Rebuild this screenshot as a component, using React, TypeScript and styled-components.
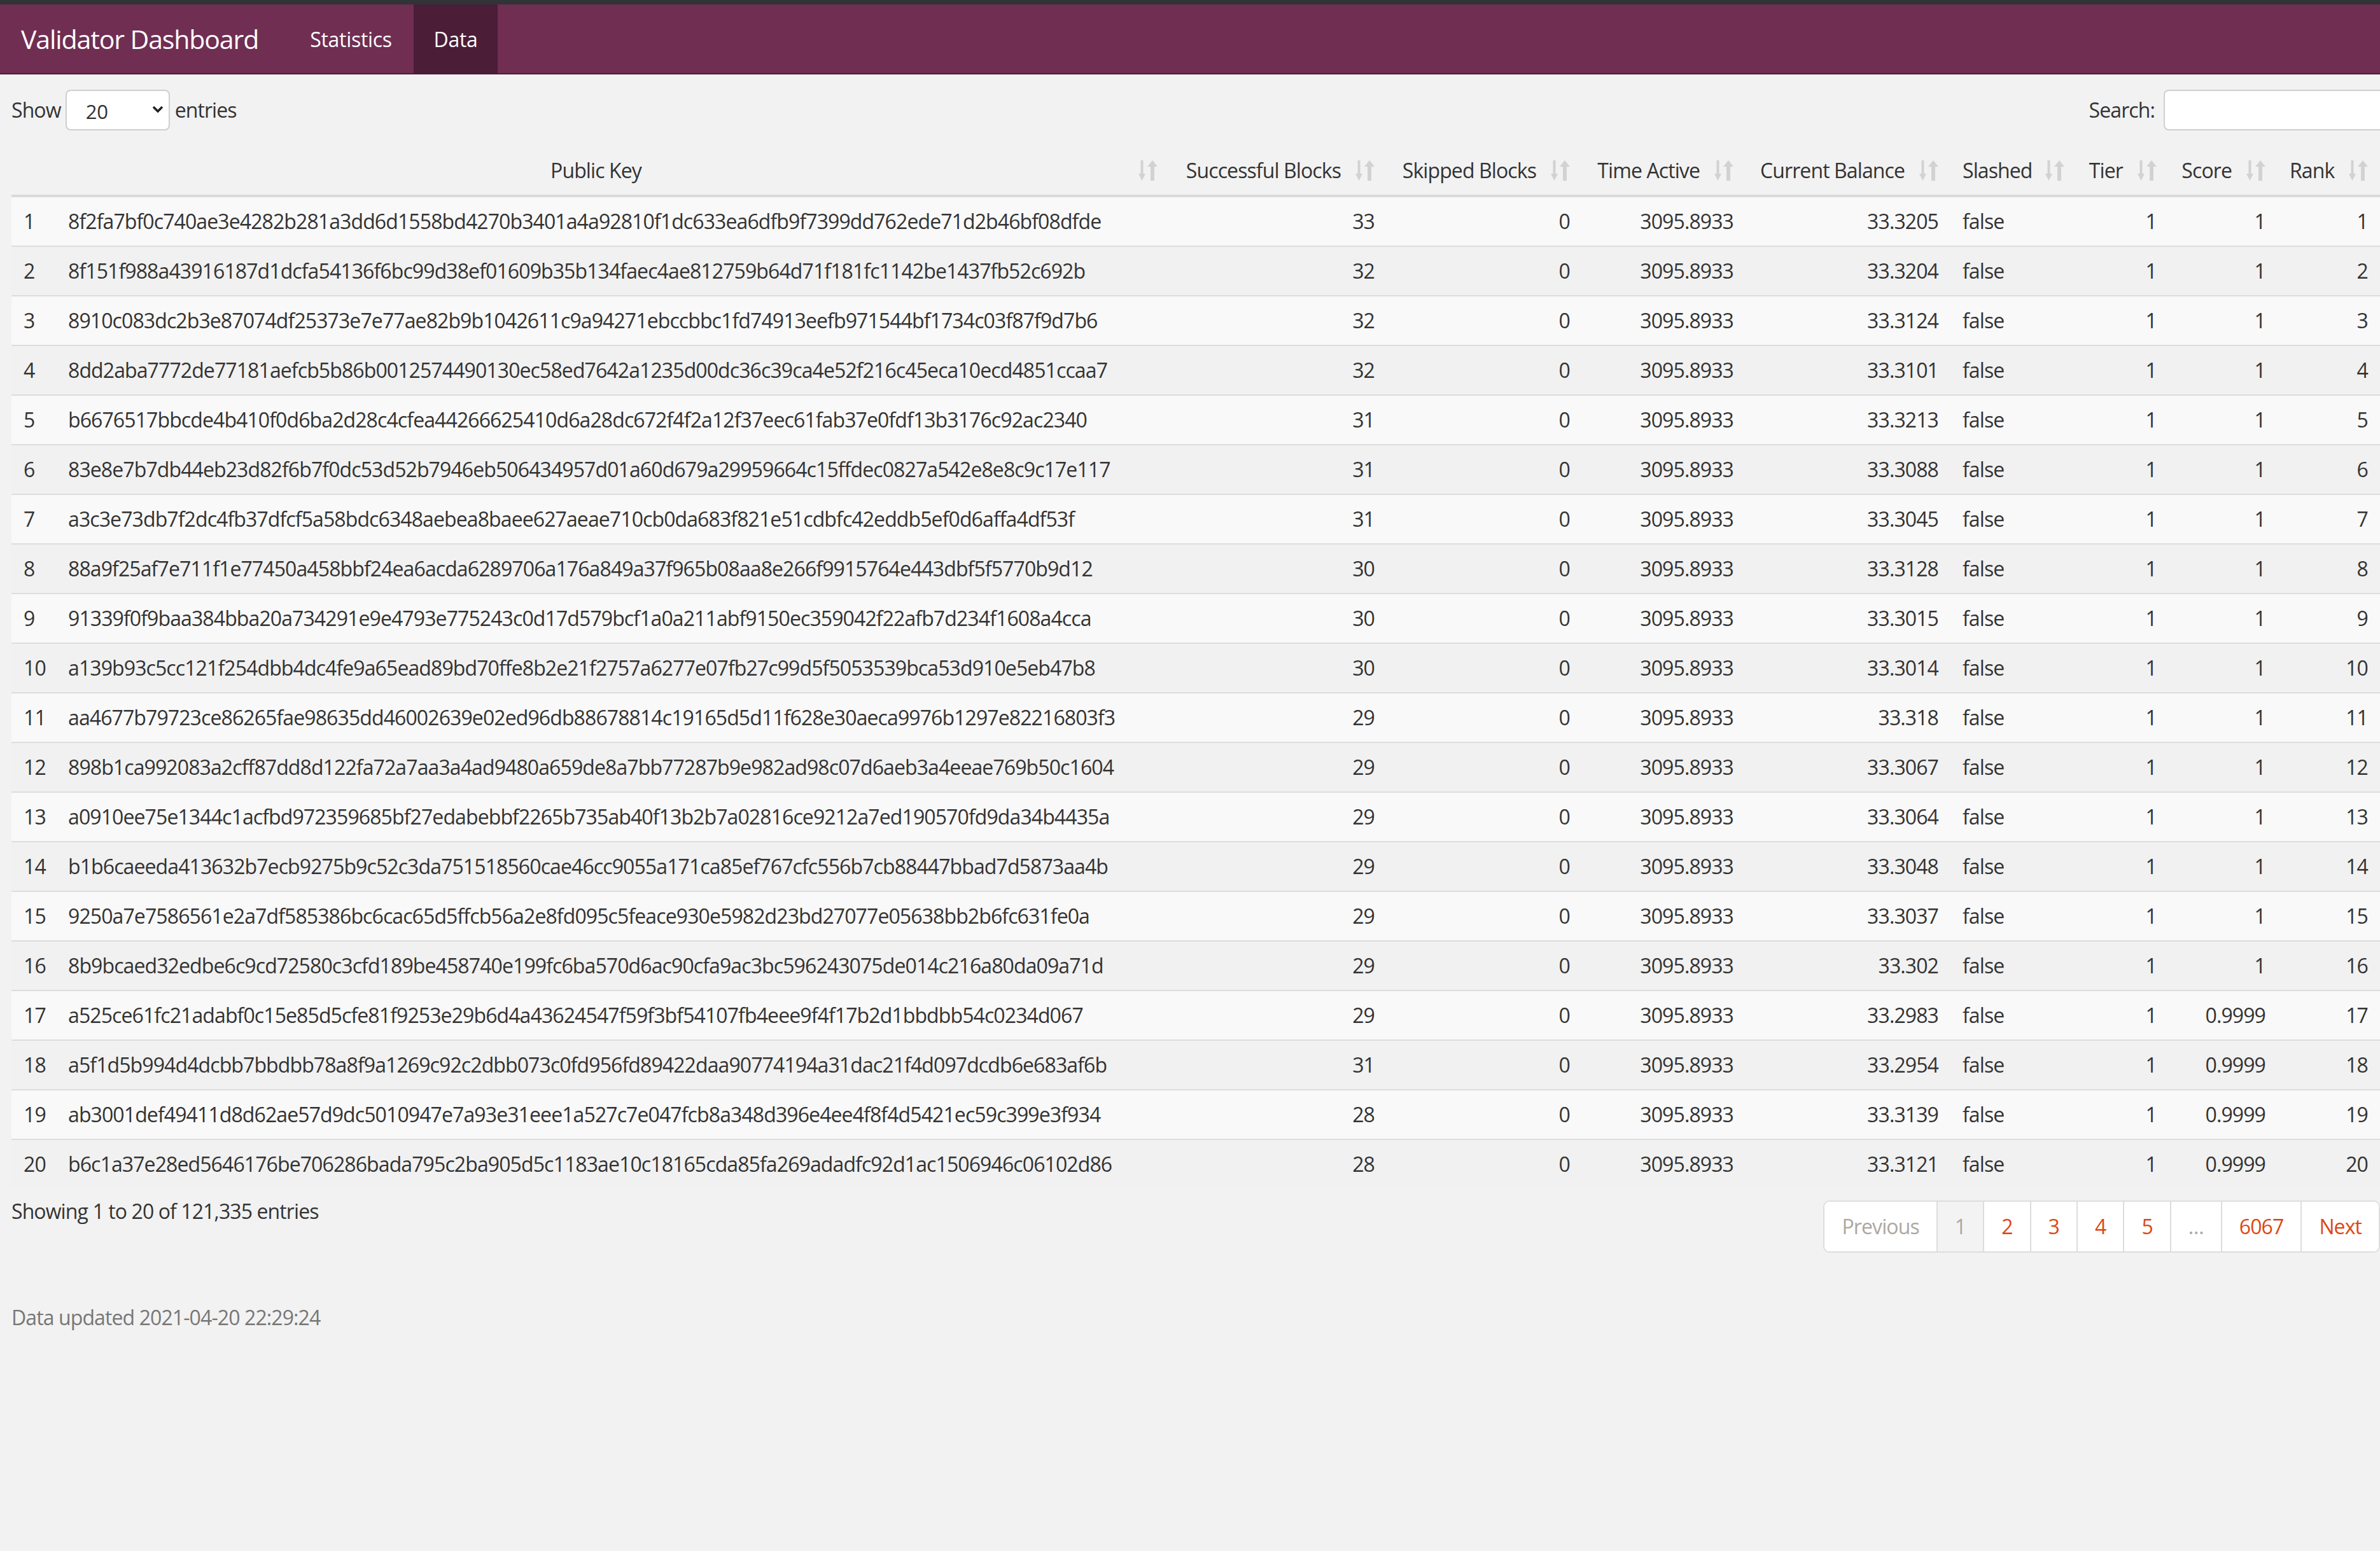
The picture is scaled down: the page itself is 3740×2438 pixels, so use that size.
import React from 'react';
import styled, { createGlobalStyle } from 'styled-components';

const GlobalStyle = createGlobalStyle`
  html, body { margin: 0; padding: 0; background: #f2f2f2; overflow: hidden; }
  body { font-family: "Open Sans", "Liberation Sans", sans-serif; color: #333; }
  * { box-sizing: border-box; }
`;

const Page = styled.div`
  width: 3740px;
  height: 2438px;
  overflow: hidden;
  background: #f2f2f2;
  display: flex;
  flex-direction: column;
`;

const TopStrip = styled.div`
  height: 7px;
  background: #323336;
  flex: 0 0 auto;
`;

const Navbar = styled.nav`
  display: flex;
  height: 110px;
  flex: 0 0 auto;
  background: #702e52;
  border-bottom: 2px solid #4f1c39;
`;

const Brand = styled.a`
  flex: 0 0 453px;
  padding-left: 33px;
  display: flex;
  align-items: center;
  font-size: 41px;
  letter-spacing: -1.1px;
  color: #fff;
`;

const NavItem = styled.a<{ $active?: boolean; $w: number }>`
  flex: 0 0 ${(p) => p.$w}px;
  display: flex;
  align-items: center;
  justify-content: center;
  font-size: 32px;
  letter-spacing: -0.3px;
  color: #fff;
  background: ${(p) => (p.$active ? '#4b1d37' : 'transparent')};
`;

const Main = styled.main`
  padding-left: 18px;
  font-size: 32px;
  letter-spacing: -0.9px;
`;

const Controls = styled.div`
  margin-top: 24px;
  height: 64px;
  margin-right: -40px;
  display: flex;
  justify-content: space-between;
  align-items: center;
`;

const Inline = styled.label`
  display: flex;
  align-items: center;
  line-height: 48px;
`;

const SelectWrap = styled.div`
  position: relative;
  width: 164px;
  height: 64px;
  margin: 0 8px 0 7px;
`;

const Select = styled.select`
  appearance: none;
  width: 100%;
  height: 100%;
  background: #fff;
  border: 2px solid #cfcfcf;
  border-radius: 8px;
  padding: 4px 0 0 30px;
  font-family: inherit;
  font-size: 31px;
  color: #333;
  outline: none;
`;

const Chevron = styled.svg`
  position: absolute;
  right: 10px;
  top: 24px;
  width: 18px;
  height: 14px;
  pointer-events: none;
`;

const SearchInput = styled.input`
  width: 380px;
  height: 64px;
  margin-left: 14px;
  background: #fff;
  border: 2px solid #cfcfcf;
  border-radius: 8px;
  outline: none;
`;

const Table = styled.table`
  margin-top: 25px;
  width: 3722px;
  table-layout: fixed;
  border-collapse: collapse;

  tbody tr + tr td {
    border-top: 2px solid #dddddd;
  }
`;

const Th = styled.th<{ $align: 'left' | 'right' | 'center'; $sortable: boolean }>`
  position: relative;
  line-height: 76px;
  padding: 0 ${(p) => (p.$sortable ? 72 : 19)}px 0 19px;
  text-align: ${(p) => p.$align};
  font-weight: 400;
  white-space: nowrap;
  border-bottom: 4px solid #dadada;
`;

const SortIcon = styled.svg`
  position: absolute;
  right: 19px;
  top: 22px;
  width: 30px;
  height: 32px;
`;

const Tr = styled.tr<{ $odd: boolean }>`
  background: ${(p) => (p.$odd ? '#f9f9f9' : '#f1f1f1')};
`;

const Td = styled.td<{ $align: 'left' | 'right' }>`
  line-height: 76px;
  padding: 0 19px;
  text-align: ${(p) => p.$align};
  white-space: nowrap;
  overflow: hidden;
`;

const Footer = styled.div`
  margin-top: 12px;
  display: flex;
  justify-content: space-between;
  align-items: flex-start;
`;

const Info = styled.div`
  line-height: 48px;
`;

const Pagination = styled.ul`
  list-style: none;
  margin: 7px 0 0 0;
  padding: 0;
  display: flex;
  background: #fff;
  border: 2px solid #dddddd;
  border-radius: 10px;
  overflow: hidden;

  li + li {
    border-left: 2px solid #dddddd;
  }
`;

const PageBtn = styled.li<{ $state: 'disabled' | 'current' | 'link' }>`
  height: 78px;
  line-height: 78px;
  padding: 0 27px;
  color: ${(p) => (p.$state === 'link' ? '#dd4814' : '#aea79f')};
  background: ${(p) => (p.$state === 'current' ? '#f3f3f3' : '#fff')};
`;

const Updated = styled.div`
  margin-top: 78px;
  line-height: 48px;
  color: #777;
`;

type Col = { label: string; width: number; head: 'left' | 'right' | 'center'; cell: 'left' | 'right'; sortable: boolean };

const cols: Col[] = [
  { label: '', width: 70, head: 'left', cell: 'left', sortable: false },
  { label: 'Public Key', width: 1750, head: 'center', cell: 'left', sortable: true },
  { label: 'Successful Blocks', width: 341, head: 'right', cell: 'right', sortable: true },
  { label: 'Skipped Blocks', width: 307, head: 'right', cell: 'right', sortable: true },
  { label: 'Time Active', width: 257, head: 'right', cell: 'right', sortable: true },
  { label: 'Current Balance', width: 322, head: 'right', cell: 'right', sortable: true },
  { label: 'Slashed', width: 198, head: 'left', cell: 'left', sortable: true },
  { label: 'Tier', width: 145, head: 'right', cell: 'right', sortable: true },
  { label: 'Score', width: 171, head: 'right', cell: 'right', sortable: true },
  { label: 'Rank', width: 161, head: 'right', cell: 'right', sortable: true },
];

const data: [string, number, string, string][] = [
  ['8f2fa7bf0c740ae3e4282b281a3dd6d1558bd4270b3401a4a92810f1dc633ea6dfb9f7399dd762ede71d2b46bf08dfde', 33, '33.3205', '1'],
  ['8f151f988a43916187d1dcfa54136f6bc99d38ef01609b35b134faec4ae812759b64d71f181fc1142be1437fb52c692b', 32, '33.3204', '1'],
  ['8910c083dc2b3e87074df25373e7e77ae82b9b1042611c9a94271ebccbbc1fd74913eefb971544bf1734c03f87f9d7b6', 32, '33.3124', '1'],
  ['8dd2aba7772de77181aefcb5b86b0012574490130ec58ed7642a1235d00dc36c39ca4e52f216c45eca10ecd4851ccaa7', 32, '33.3101', '1'],
  ['b6676517bbcde4b410f0d6ba2d28c4cfea44266625410d6a28dc672f4f2a12f37eec61fab37e0fdf13b3176c92ac2340', 31, '33.3213', '1'],
  ['83e8e7b7db44eb23d82f6b7f0dc53d52b7946eb506434957d01a60d679a29959664c15ffdec0827a542e8e8c9c17e117', 31, '33.3088', '1'],
  ['a3c3e73db7f2dc4fb37dfcf5a58bdc6348aebea8baee627aeae710cb0da683f821e51cdbfc42eddb5ef0d6affa4df53f', 31, '33.3045', '1'],
  ['88a9f25af7e711f1e77450a458bbf24ea6acda6289706a176a849a37f965b08aa8e266f9915764e443dbf5f5770b9d12', 30, '33.3128', '1'],
  ['91339f0f9baa384bba20a734291e9e4793e775243c0d17d579bcf1a0a211abf9150ec359042f22afb7d234f1608a4cca', 30, '33.3015', '1'],
  ['a139b93c5cc121f254dbb4dc4fe9a65ead89bd70ffe8b2e21f2757a6277e07fb27c99d5f5053539bca53d910e5eb47b8', 30, '33.3014', '1'],
  ['aa4677b79723ce86265fae98635dd46002639e02ed96db88678814c19165d5d11f628e30aeca9976b1297e82216803f3', 29, '33.318', '1'],
  ['898b1ca992083a2cff87dd8d122fa72a7aa3a4ad9480a659de8a7bb77287b9e982ad98c07d6aeb3a4eeae769b50c1604', 29, '33.3067', '1'],
  ['a0910ee75e1344c1acfbd972359685bf27edabebbf2265b735ab40f13b2b7a02816ce9212a7ed190570fd9da34b4435a', 29, '33.3064', '1'],
  ['b1b6caeeda413632b7ecb9275b9c52c3da751518560cae46cc9055a171ca85ef767cfc556b7cb88447bbad7d5873aa4b', 29, '33.3048', '1'],
  ['9250a7e7586561e2a7df585386bc6cac65d5ffcb56a2e8fd095c5feace930e5982d23bd27077e05638bb2b6fc631fe0a', 29, '33.3037', '1'],
  ['8b9bcaed32edbe6c9cd72580c3cfd189be458740e199fc6ba570d6ac90cfa9ac3bc596243075de014c216a80da09a71d', 29, '33.302', '1'],
  ['a525ce61fc21adabf0c15e85d5cfe81f9253e29b6d4a43624547f59f3bf54107fb4eee9f4f17b2d1bbdbb54c0234d067', 29, '33.2983', '0.9999'],
  ['a5f1d5b994d4dcbb7bbdbb78a8f9a1269c92c2dbb073c0fd956fd89422daa90774194a31dac21f4d097dcdb6e683af6b', 31, '33.2954', '0.9999'],
  ['ab3001def49411d8d62ae57d9dc5010947e7a93e31eee1a527c7e047fcb8a348d396e4ee4f8f4d5421ec59c399e3f934', 28, '33.3139', '0.9999'],
  ['b6c1a37e28ed5646176be706286bada795c2ba905d5c1183ae10c18165cda85fa269adadfc92d1ac1506946c06102d86', 28, '33.3121', '0.9999'],
];

const pages: { label: string; state: 'disabled' | 'current' | 'link' }[] = [
  { label: 'Previous', state: 'disabled' },
  { label: '1', state: 'current' },
  { label: '2', state: 'link' },
  { label: '3', state: 'link' },
  { label: '4', state: 'link' },
  { label: '5', state: 'link' },
  { label: '…', state: 'disabled' },
  { label: '6067', state: 'link' },
  { label: 'Next', state: 'link' },
];

const Sort = () => (
  <SortIcon viewBox="0 0 30 32">
    <rect x="3.5" y="0" width="4" height="24" fill="#d2d2d2" />
    <polygon points="0,21 11,21 5.5,32" fill="#d2d2d2" />
    <polygon points="14,10 30,10 22,0" fill="#d2d2d2" />
    <rect x="19" y="8" width="6" height="24" fill="#d2d2d2" />
  </SortIcon>
);

export default function App() {
  return (
    <Page>
      <GlobalStyle />
      <TopStrip />
      <Navbar>
        <Brand>Validator Dashboard</Brand>
        <NavItem $w={197}>Statistics</NavItem>
        <NavItem $w={132} $active>
          Data
        </NavItem>
      </Navbar>
      <Main>
        <Controls>
          <Inline>
            Show
            <SelectWrap>
              <Select defaultValue="20">
                <option value="10">10</option>
                <option value="20">20</option>
                <option value="50">50</option>
              </Select>
              <Chevron viewBox="0 0 18 14">
                <polyline points="2,3 9,10 16,3" fill="none" stroke="#222" strokeWidth="3.6" />
              </Chevron>
            </SelectWrap>
            entries
          </Inline>
          <Inline>
            Search:
            <SearchInput type="search" />
          </Inline>
        </Controls>
        <Table>
          <colgroup>
            {cols.map((c, i) => (
              <col key={i} style={{ width: c.width }} />
            ))}
          </colgroup>
          <thead>
            <tr>
              {cols.map((c, i) => (
                <Th key={i} $align={c.head} $sortable={c.sortable}>
                  {c.label}
                  {c.sortable && <Sort />}
                </Th>
              ))}
            </tr>
          </thead>
          <tbody>
            {data.map(([key, succ, bal, score], i) => {
              const cells = [String(i + 1), key, String(succ), '0', '3095.8933', bal, 'false', '1', score, String(i + 1)];
              return (
                <Tr key={i} $odd={i % 2 === 0}>
                  {cells.map((v, j) => (
                    <Td key={j} $align={cols[j].cell}>
                      {v}
                    </Td>
                  ))}
                </Tr>
              );
            })}
          </tbody>
        </Table>
        <Footer>
          <Info>Showing 1 to 20 of 121,335 entries</Info>
          <Pagination>
            {pages.map((p) => (
              <PageBtn key={p.label} $state={p.state}>
                {p.label}
              </PageBtn>
            ))}
          </Pagination>
        </Footer>
        <Updated>Data updated 2021-04-20 22:29:24</Updated>
      </Main>
    </Page>
  );
}
